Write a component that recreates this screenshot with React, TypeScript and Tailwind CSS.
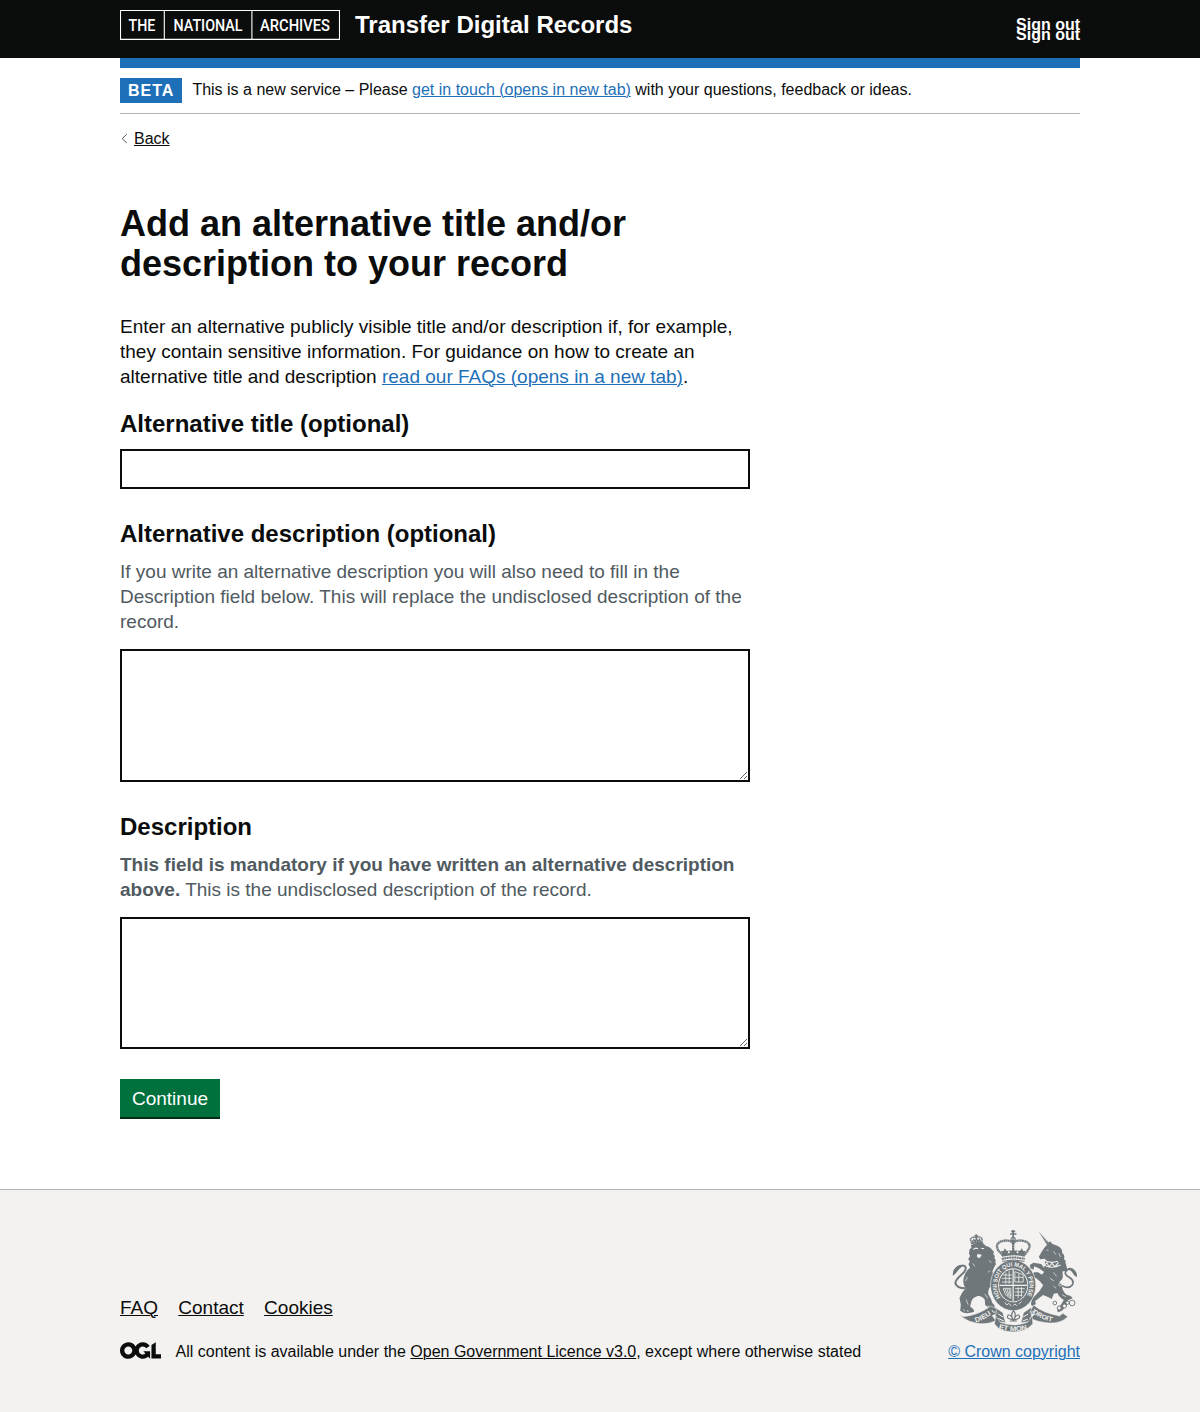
import React from "react";

function ArchivesLogo() {
  return (
    <svg width="220" height="30" viewBox="0 0 220 30" className="block" role="img" aria-label="The National Archives">
      <path d="M0.5 0.5H219.5V29.4H0.5ZM44.3 0.5V29M131.9 0.5V29" fill="none" stroke="#fff" strokeWidth="1.1" />
      <g fill="#fff" fontFamily="Roboto, sans-serif" fontSize="15.9" fontWeight="500">
        <text x="8.6" y="20.7" textLength="26.8" lengthAdjust="spacingAndGlyphs">THE</text>
        <text x="53.5" y="20.7" textLength="69" lengthAdjust="spacingAndGlyphs">NATIONAL</text>
        <text x="140" y="20.7" textLength="70" lengthAdjust="spacingAndGlyphs">ARCHIVES</text>
      </g>
    </svg>
  );
}

function OglLogo() {
  return (
    <svg viewBox="0 0 483.2 195.7" width="41" height="17" className="mr-[14.5px] mb-[3px] block shrink-0" aria-hidden="true">
      <path
        fill="#0b0c0c"
        d="M421.5 142.8V.1l-50.7 32.3v161.1h112.4v-50.7zm-122.3-9.6A47.12 47.12 0 0 1 221 97.8c0-26 21.1-47.1 47.1-47.1 16.7 0 31.4 8.7 39.7 21.8l42.7-27.2A97.63 97.63 0 0 0 268.1 0c-36.5 0-68.3 20.1-85.1 49.7A98 98 0 0 0 97.8 0C43.9 0 0 43.9 0 97.8s43.9 97.8 97.8 97.8c36.5 0 68.3-20.1 85.1-49.7a97.76 97.76 0 0 0 149.6 25.4l19.4 22.2h3v-87.8h-80l24.3 27.5zM97.8 145c-26 0-47.1-21.1-47.1-47.1s21.1-47.1 47.1-47.1 47.1 21.1 47.1 47.1S123.8 145 97.8 145"
      />
    </svg>
  );
}

function Crest() {
  const g = "#6f777b";
  const bg = "#f3f2f1";
  return (
    <svg width="125" height="102" viewBox="19.5 24 375 306" className="block" aria-hidden="true">
      {/* lion */}
      <path fill={g} d="M76 70Q94 58 115 65L120 71Q134 74 140 84Q148 88 143 96Q151 102 146 108Q153 114 149 121Q154 127 148 132L141 147L143 163Q137 172 146 184Q160 194 158 204Q152 210 143 202L133 195Q126 205 129 218Q138 230 140 242Q150 250 147 258L130 257L119 249L118 233Q108 220 97 222Q80 226 77 241L74 254Q88 262 85 270L70 273Q58 276 44 266L46 248L42 228Q50 210 60 199Q50 186 55 166Q59 147 74 137L69 127L73 118L68 112L74 101Q68 96 72 88Q69 82 78 78Z" />
      <path d="M59 199Q35 199 30 185Q28 176 46 160Q64 145 60 135Q56 128 45 132Q33 137 27 151" fill="none" stroke={g} strokeWidth="6" />
      <path d="M49 129Q34 129 26 142Q21 150 22 161Q28 159 34 150Q42 139 49 134Z" fill={g} />
      <path d="M83 82L91 78L98 80M107 79L116 80M96 98L107 99L102 107L96 105Z" fill={bg} stroke={bg} strokeWidth="3" />
      <path d="M82 124L88 133M130 116L138 121M66 165L60 177M127 151L134 146M118 216L127 229M62 233L68 248M54 262L57 268M66 264L68 270M128 250L130 255" fill="none" stroke={bg} strokeWidth="2" />
      {/* lion's crown */}
      <path d="M78 62L75 51Q80 43 92 47Q104 42 110 50L109 61" fill="none" stroke={g} strokeWidth="4.5" strokeDasharray="4 1" />
      <path d="M80 61L85 53L89 59L93 50L97 59L102 52L106 60M92 37V50M87 42H98" stroke={g} strokeWidth="4" fill="none" />
      <path d="M77 65Q94 57 112 63" stroke={g} strokeWidth="6" fill="none" />

      {/* unicorn */}
      <g fill={g}>
        <path d="M279 28L312 64L305 69Z" />
        <path d="M302 71L307 65L314 58L321 66L337 72Q352 80 350 93Q360 101 355 110Q362 116 360 122Q364 134 366 148L351 148L352 166Q348 178 334 184Q340 191 330 205L323 220L319 231Q305 224 293 219L269 237L271 246L260 253L256 246L260 230L282 207L293 190L283 178L270 167L259 174L254 164L266 151L278 151L289 158L296 150L280 139L266 133L264 143L255 139L253 129L264 122L287 126L296 137L300 110L284 112L280 104Q291 85 296 78Z" />
        <path d="M335 178Q354 184 350 198Q356 215 365 219Q379 222 381 229L368 235L364 251L348 267L337 271L335 264L348 245L355 234Q340 225 336 213Q324 216 314 213Z" />
      </g>
      <path d="M283 31L309 65M285 35L290 36M290 41L296 42M296 48L302 49M301 54L307 55" stroke={bg} strokeWidth="1" />
      <path d="M296 114Q314 126 337 118M293 127Q315 143 345 129M292 121L297 130L304 122L311 135L319 124L329 134L339 121" fill="none" stroke={bg} strokeWidth="3.2" />
      <path d="M303 84L309 85M324 88L331 98M340 94L345 105M324 151L333 163M313 169L325 176M324 192L332 199M350 218L361 224" fill="none" stroke={bg} strokeWidth="2" />
      <path d="M350 191Q369 203 381 188Q387 175 371 166Q353 156 363 145Q371 137 380 145" fill="none" stroke={g} strokeWidth="5" />
      <path d="M369 138Q381 135 389 146Q396 154 394 165Q387 163 383 155Q378 146 369 142Z" fill={g} />
      <g fill="none" stroke={g} strokeWidth="2.8">
        <circle cx="328" cy="243" r="5.5" />
        <circle cx="341" cy="258" r="6" fill={bg} />
        <circle cx="357" cy="252" r="6" fill={bg} />
        <circle cx="366" cy="242" r="5" fill={bg} />
        <circle cx="380" cy="243" r="8.5" />
      </g>
      <circle cx="344" cy="188" r="4" fill="none" stroke={bg} strokeWidth="2" />

      {/* garter and shield */}
      <ellipse cx="203" cy="190" rx="68" ry="76" fill={g} stroke={bg} strokeWidth="2" />
      <ellipse cx="203" cy="190" rx="45" ry="51" fill={bg} />
      <ellipse cx="203" cy="190" rx="42.5" ry="48.5" fill={g} />
      <path id="crest-motto" d="M165 226A49 57 0 1 1 241 226" fill="none" />
      <text fill={bg} fontFamily="Liberation Sans, sans-serif" fontWeight="700" fontSize="18">
        <textPath href="#crest-motto" textLength="236" lengthAdjust="spacingAndGlyphs">HONI SOIT QUI MAL Y PENSE</textPath>
      </text>
      <g stroke={bg} fill="none" strokeWidth="2.4">
        <path d="M203 142V238M162 190H244" strokeWidth="3.5" />
        <path d="M172 159H199M169 169H199M169 180H199M181 152V185M191 146V185" />
        <path d="M208 149L233 158V180H208ZM220 154V182M208 166H233" />
        <path d="M173 199L180 218L196 230V199ZM178 200L188 222M184 200L192 224M190 200L195 222" />
        <path d="M209 200H238M208 210H236M208 220H231M218 195V229M228 195V224" />
        <path d="M178 241L184 249L190 244L198 253M203 250L209 246L214 252M219 246L228 239" />
      </g>

      {/* royal crown */}
      <g fill="none" stroke={g}>
        <path d="M171 99L158 85Q147 63 171 57Q193 52 203 64Q213 52 236 57Q260 64 248 84L236 100" strokeWidth="7" strokeDasharray="5 1" />
        <path d="M203 60V88" strokeWidth="7" strokeDasharray="5 1" />
        <path d="M197 28H209M203 23V48M194 36H213" strokeWidth="5" />
        <path d="M169 101Q203 91 238 101" strokeWidth="7" />
        <path d="M169 111Q203 102 238 111" strokeWidth="6" strokeDasharray="6 1.5" />
        <path d="M170 118Q203 110 237 118" strokeWidth="3" />
      </g>
      <circle cx="203" cy="52" r="8" fill={g} />
      <path d="M196 51H210" stroke={bg} strokeWidth="2" />
      <g fill={g}>
        <path d="M171 98L167 87H174L178 79L183 86H189L186 96ZM194 94L190 85L199 86L203 79L207 86L216 85L212 94ZM220 96L217 86L224 86L229 79L233 87L240 87L236 98Z" />
      </g>

      {/* motto ribbon */}
      <g fill={g} stroke={bg} strokeWidth="1.5">
        <path d="M148 256L172 272L180 302L151 298ZM258 256L234 272L227 302L257 298Z" />
        <path d="M40 276L54 284L72 281Q107 274 134 253L151 258L155 274L140 281L151 296Q122 310 91 303Q69 299 54 288Z" />
        <path d="M264 249Q292 273 342 282L352 274L367 284Q346 305 310 303Q276 300 252 288L267 278L253 272Z" />
        <path d="M151 282L164 301Q204 317 246 301L260 283L262 306L244 321Q202 339 161 321L147 306Z" />
      </g>
      <path d="M139 264Q142 274 151 270M267 262Q264 274 254 269M158 276L173 285M158 289L175 297M248 276L233 285M247 291L232 297" stroke={bg} strokeWidth="3" fill="none" />
      <path d="M204 266Q214 278 205 294H203Q194 278 204 266ZM202 293Q180 291 188 279Q198 278 202 293ZM206 293Q228 291 220 279Q210 278 206 293ZM193 297H214" fill={bg} stroke={g} strokeWidth="3.5" />
      <path id="crest-left" d="M91 301Q118 294 145 271" fill="none" />
      <path id="crest-right" d="M261 273Q288 294 328 301" fill="none" />
      <path id="crest-bottom" d="M159 320Q203 335 249 320" fill="none" />
      <g fill={bg} fontFamily="Liberation Sans, sans-serif" fontWeight="700">
        <text fontSize="21"><textPath href="#crest-left" textLength="52" lengthAdjust="spacingAndGlyphs">DIEU</textPath></text>
        <text fontSize="20"><textPath href="#crest-right" textLength="64" lengthAdjust="spacingAndGlyphs">DROIT</textPath></text>
        <text fontSize="21"><textPath href="#crest-bottom" textLength="88" lengthAdjust="spacingAndGlyphs">ET MON</textPath></text>
      </g>
    </svg>
  );
}

const link = "underline decoration-1 underline-offset-[1px]";
const textArea = "mt-[15px] block w-full resize-y rounded-none border-2 border-[#0b0c0c] bg-white p-[5px] text-[19px] leading-[25px]";

export default function App() {
  return (
    <div className="flex min-h-[1412px] flex-col bg-white font-['Liberation_Sans',Arial,sans-serif] text-[#0b0c0c] antialiased">
      <header className="h-[58px] bg-[#0b0c0c] text-white">
        <div className="mx-auto flex w-[960px] items-start pt-[10px]">
          <ArchivesLogo />
          <span className="ml-[15px] text-[24px] leading-[30px] font-bold">Transfer Digital Records</span>
          <nav className="ml-auto flex flex-col pt-[10px] text-[16px] leading-[10px] font-bold">
            <a href="#">Sign out</a>
            <a href="#">Sign out</a>
          </nav>
        </div>
      </header>

      <div className="mx-auto w-[960px]">
        <div className="h-[10px] bg-[#1d70b8]" />
        <div className="flex items-start border-b border-[#b1b4b6] py-[10px]">
          <strong className="mr-[10.4px] h-[25px] w-[62px] bg-[#1d70b8] pl-2 text-[16px] leading-[25px] tracking-[1px] text-white">BETA</strong>
          <span className="pt-[2px] text-[16px] leading-[20px]">
            This is a new service – Please{" "}
            <a href="#" className={`${link} text-[#1d70b8]`}>get in touch (opens in new tab)</a> with your questions, feedback or ideas.
          </span>
        </div>
        <a href="#" className="mt-[15px] flex h-5 items-center text-[16px] leading-[20px]">
          <svg width="14" height="12" viewBox="0 0 14 12" className="block" fill="none" stroke="#505a5f" strokeWidth="1">
            <path d="M6.8 1.2L2.2 5.6L6.8 10" />
          </svg>
          <span className={link}>Back</span>
        </a>
      </div>

      <main className="mx-auto w-[960px] pt-[55px]">
        <div className="w-[630px]">
          <h1 className="text-[36px] leading-[40px] font-bold">Add an alternative title and/or description to your record</h1>
          <p className="mt-[30px] text-[19px] leading-[25px]">
            Enter an alternative publicly visible title and/or description if, for example, they contain sensitive information. For guidance on how to create an alternative title and description{" "}
            <a href="#" className={`${link} text-[#1d70b8]`}>read our FAQs (opens in a new tab)</a>.
          </p>

          <label htmlFor="title" className="mt-5 block text-[24px] leading-[30px] font-bold">Alternative title (optional)</label>
          <input id="title" className="mt-[10px] block h-[40px] w-full rounded-none border-2 border-[#0b0c0c] bg-white p-[5px] text-[19px]" />

          <label htmlFor="alt-description" className="mt-[30px] block text-[24px] leading-[30px] font-bold">Alternative description (optional)</label>
          <p className="mt-[10px] text-[19px] leading-[25px] text-[#505a5f]">
            If you write an alternative description you will also need to fill in the Description field below. This will replace the undisclosed description of the record.
          </p>
          <textarea id="alt-description" className={`${textArea} h-[133px]`} />

          <label htmlFor="description" className="mt-[30px] block text-[24px] leading-[30px] font-bold">Description</label>
          <p className="mt-[10px] text-[19px] leading-[25px] text-[#505a5f]">
            <strong>This field is mandatory if you have written an alternative description above.</strong> This is the undisclosed description of the record.
          </p>
          <textarea id="description" className={`${textArea} h-[132px]`} />

          <button className="mt-[30px] block h-[38px] w-[100px] bg-[#00703c] text-[19px] leading-[19px] text-white shadow-[0_2px_0_#002d18]">Continue</button>
        </div>
      </main>

      <footer className="mt-[72px] grow border-t border-[#b1b4b6] bg-[#f3f2f1]">
        <div className="mx-auto flex w-[960px] items-end justify-between pt-[40px]">
          <div>
            <ul className="flex gap-[20.3px] text-[19px] leading-[25px]">
              <li><a href="#" className={link}>FAQ</a></li>
              <li><a href="#" className={link}>Contact</a></li>
              <li><a href="#" className={link}>Cookies</a></li>
            </ul>
            <div className="mt-[22px] flex items-center text-[16px] leading-[20px]">
              <OglLogo />
              <span>
                All content is available under the <a href="#" className={link}>Open Government Licence v3.0</a>, except where otherwise stated
              </span>
            </div>
          </div>
          <a href="#" className="flex flex-col items-center text-[16px] leading-[20px] text-[#1d70b8]">
            <Crest />
            <span className={`mt-[10px] ${link}`}>© Crown copyright</span>
          </a>
        </div>
      </footer>
    </div>
  );
}
